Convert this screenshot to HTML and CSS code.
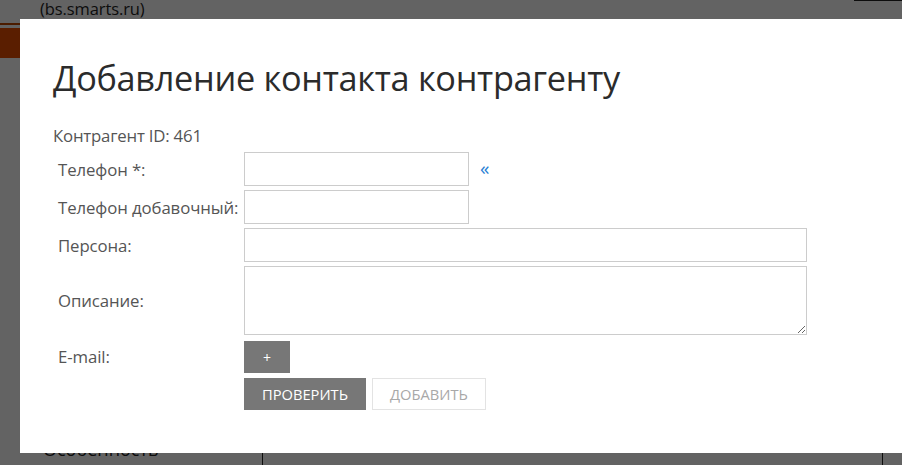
FILE: index.html
```html
<!DOCTYPE html>
<html lang="ru">
<head>
<meta charset="utf-8">
<title>Добавление контакта контрагенту</title>
<link rel="stylesheet" href="styles.css">
</head>
<body>
<div class="page">
  <div class="topbar">
    <span class="site">(bs.smarts.ru)</span>
    <span class="topbar-mark"></span>
  </div>
  <div class="brand-strip"></div>
  <div class="page-body">
    <div class="side">
      <div class="side-item">Особенность</div>
    </div>
    <div class="main"></div>
  </div>
</div>

<div class="overlay"></div>

<div class="modal">
  <h1 class="modal-title">Добавление контакта контрагенту</h1>
  <div class="contractor">Контрагент ID: 461</div>
  <div class="form">
    <label class="label">Телефон *:</label>
    <div class="field field-with-link">
      <input class="input input-short" type="text">
      <a class="back-link" href="#">«</a>
    </div>

    <label class="label">Телефон добавочный:</label>
    <div class="field"><input class="input input-short" type="text"></div>

    <label class="label">Персона:</label>
    <div class="field"><input class="input input-long" type="text"></div>

    <label class="label">Описание:</label>
    <div class="field"><textarea class="textarea"></textarea></div>

    <label class="label">E-mail:</label>
    <div class="field"><button class="btn btn-dark btn-plus" type="button">+</button></div>

    <span class="label"></span>
    <div class="field actions">
      <button class="btn btn-dark" type="button">ПРОВЕРИТЬ</button>
      <button class="btn btn-light" type="button">ДОБАВИТЬ</button>
    </div>
  </div>
</div>
</body>
</html>
```

FILE: styles.css
```css
* { box-sizing: border-box; }

html, body {
  margin: 0;
  padding: 0;
  width: 902px;
  height: 465px;
  overflow: hidden;
}

body {
  font-family: "Open Sans", "Noto Sans", sans-serif;
  background: #ffffff;
  position: relative;
}

/* underlying page */
.page {
  display: flex;
  flex-direction: column;
  height: 465px;
}

.topbar {
  height: 19px;
  display: flex;
  align-items: flex-start;
  padding-left: 40px;
}

.site {
  font-size: 16.5px;
  line-height: 18px;
  color: #1f1f1f;
  letter-spacing: -0.1px;
}

.topbar-mark {
  margin-left: auto;
  width: 48px;
  height: 1px;
  background: #222;
}

.brand-strip {
  margin-top: 4px;
  height: 35px;
  width: 20px;
  border-top: 2px solid #c24a00;
  background: linear-gradient(#ffffff 0, #ffffff 3px, #e84f00 3px);
}

.page-body {
  flex: 1;
  display: flex;
}

.side {
  width: 263px;
  border-right: 1px solid #222;
  display: flex;
  flex-direction: column;
  justify-content: flex-end;
  padding-left: 43px;
}

.side-item {
  font-size: 18px;
  color: #222;
  line-height: 20px;
  margin-bottom: 6px;
}

.main {
  flex: 1;
  border-right: 1px solid #222;
  margin-right: 19px;
}

.overlay {
  position: absolute;
  inset: 0;
  background: rgba(0, 0, 0, 0.61);
}

/* modal */
.modal {
  position: absolute;
  left: 20px;
  top: 19px;
  right: 0;
  height: 434px;
  background: #ffffff;
  padding: 36px 0 0 33px;
  color: #333;
}

.modal-title {
  margin: 0;
  font-weight: 400;
  font-size: 34.3px;
  line-height: 46px;
  color: #2b2b2b;
  letter-spacing: -0.3px;
}

.contractor {
  margin-top: 24px;
  font-size: 16.8px;
  line-height: 21px;
  color: #555;
  letter-spacing: -0.2px;
}

.form {
  margin-top: 6px;
  display: grid;
  grid-template-columns: 191px auto;
  row-gap: 4px;
  align-items: center;
}

.label {
  padding-left: 5px;
  font-size: 16.8px;
  color: #555;
  white-space: nowrap;
  letter-spacing: -0.1px;
}

.field {
  display: flex;
  align-items: center;
}

.field-with-link { gap: 11px; }

.input {
  height: 34px;
  border: 1px solid #cccccc;
  background: #fff;
  padding: 4px 8px;
  font: inherit;
  outline: none;
}

.input-short { width: 225px; }
.input-long { width: 563px; }

.textarea {
  width: 563px;
  height: 69px;
  border: 1px solid #cccccc;
  resize: both;
  font: inherit;
  display: block;
}

.back-link {
  color: #2a7fd4;
  text-decoration: none;
  font-size: 19px;
  line-height: 20px;
  margin-top: -3px;
}

.btn {
  height: 32px;
  border: 1px solid transparent;
  font-family: inherit;
  font-size: 14.7px;
  padding: 0 17px;
  cursor: pointer;
}

.btn-dark {
  background: #777777;
  color: #ffffff;
  border-color: #777777;
}

.btn-plus {
  width: 46px;
  padding: 0;
  margin-top: 2px;
  font-size: 14px;
}

.btn-light {
  background: #fff;
  color: #a8a8a8;
  border-color: #e3e3e3;
}

.actions {
  gap: 6px;
  margin-top: 1px;
}
```
